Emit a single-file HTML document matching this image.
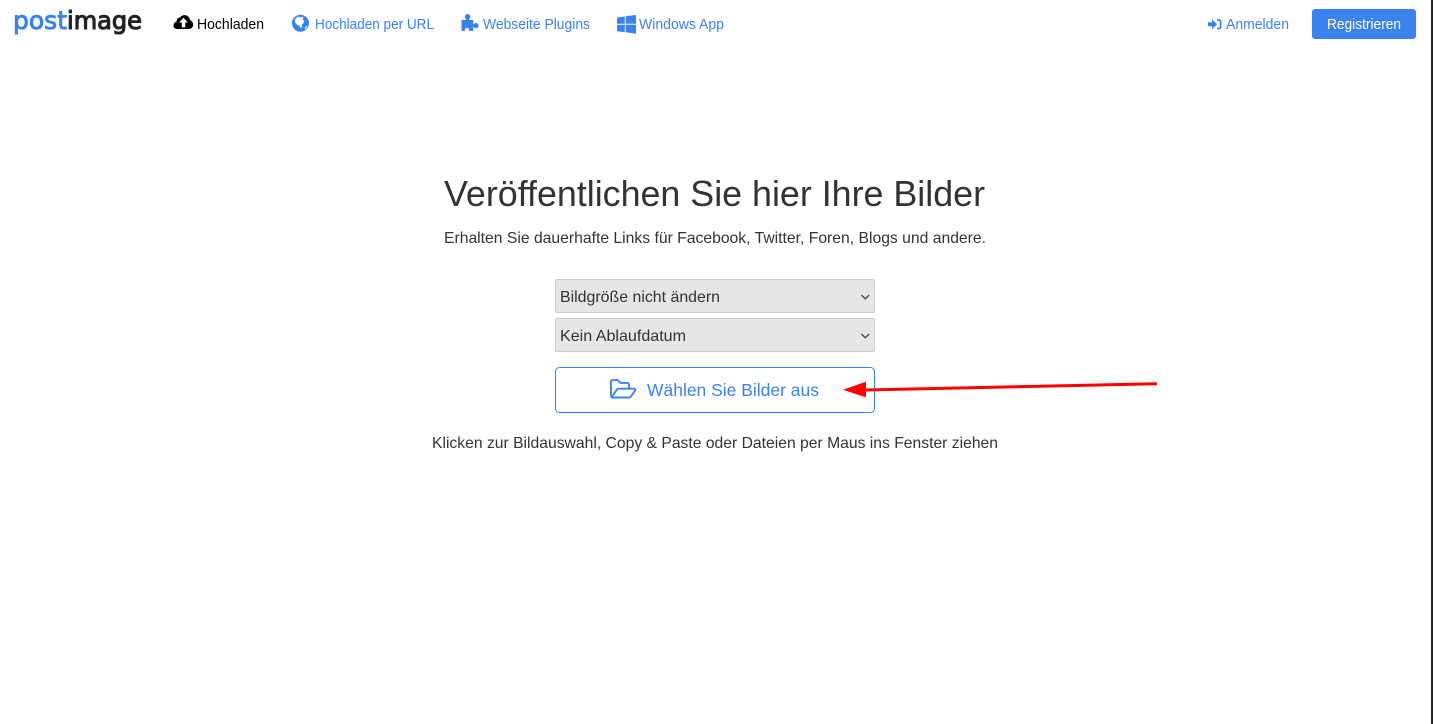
<!DOCTYPE html>
<html lang="de">
<head>
<meta charset="utf-8">
<title>Postimage</title>
<style>
html,body{margin:0;padding:0;width:1433px;height:724px;overflow:hidden;background:#fff}
svg{position:absolute;left:0;top:0;display:block}
text{font-family:"Liberation Sans",sans-serif;white-space:pre}
.n{font-size:14.4px;fill:#3b82ec}
.d{font-size:16px;fill:#333}
.l{font-family:"DejaVu Sans",sans-serif;font-size:25px}
</style>
</head>
<body>
<svg width="1433" height="724" viewBox="0 0 1433 724" xmlns="http://www.w3.org/2000/svg">
<rect x="1431" y="0" width="2" height="724" fill="#222"/>

<!-- logo -->
<text class="l" x="13" y="29" fill="#3b82ec" stroke="#3b82ec" stroke-width=".9" textLength="54" lengthAdjust="spacingAndGlyphs">post</text>
<text class="l" x="67" y="29" fill="#222" stroke="#222" stroke-width="1.100" textLength="75" lengthAdjust="spacingAndGlyphs">image</text>

<!-- cloud upload -->
<path d="M173.500 25.800c0-2.300 1.500-4 3.400-4.500-.1-.3-.1-.6-.1-.9 0-1.800 1.500-3 3.100-2.700 1-1.600 2.700-2.600 4.600-2.600 2.900 0 5.200 2.200 5.400 5 1.900.6 3.300 2.400 3.300 4.500 0 2.500-2 4.400-4.500 4.400h-11.700c-2 0-3.500-1.500-3.500-3.200z" fill="#000"/>
<path d="M183.500 17.800l-4.400 4.700h2.700v4.900h3.400v-4.900h2.700z" fill="#fff"/>
<text class="n" x="197" y="29" style="fill:#000" textLength="67" lengthAdjust="spacingAndGlyphs">Hochladen</text>

<!-- globe -->
<circle cx="300.500" cy="23.300" r="8.500" fill="#3b82ec"/>
<path d="M295 19.500c.9-1.700 2.500-2.700 4-2.900l1.500 1 1.800-.8 1.200 1.200-1 1.600 1.700 1.200-.6 2.200-1.600 1.500.1 2.400-1.500 1.300-1.300-2.600-2.200-.8-1.900-2.200z" fill="#fff"/>
<path d="M305.800 26.200l1.500-.7-.8 2.600-2 1.700z" fill="#fff"/>
<text class="n" x="315" y="29" textLength="119" lengthAdjust="spacingAndGlyphs">Hochladen per URL</text>

<!-- puzzle -->
<path d="M461.500 20h4.200c.6 0 .7-.6.2-1.100-.7-.7-1-1.300-1-2.100 0-1.500 1.200-2.800 2.700-2.800s2.800 1.300 2.800 2.800c0 .8-.3 1.400-1 2.100-.5.500-.4 1.100.2 1.100h3.600v3.600c0 .6.700.6 1 .2.500-.5 1.100-.8 1.900-.8 1.400 0 2.500 1.200 2.500 2.600s-1.100 2.600-2.500 2.600c-.8 0-1.400-.3-1.900-.8-.3-.4-1-.4-1 .2V31h-3.900c-.2-2.100-1-3.300-2.300-3.300s-2.100 1.200-2.300 3.300h-3.200z" fill="#3b82ec"/>
<text class="n" x="483" y="29" textLength="107" lengthAdjust="spacingAndGlyphs">Webseite Plugins</text>

<!-- windows -->
<path d="M617 17.500l7.800-1v7.300H617zM625.700 16.300l10.300-1.300v8.800h-10.300zM617 24.800h7.800v7.400l-7.800-1zM625.700 24.800H636v8.900l-10.300-1.400z" fill="#3b82ec"/>
<text class="n" x="639" y="29" textLength="85" lengthAdjust="spacingAndGlyphs">Windows App</text>

<!-- sign in -->
<path d="M1208 22.200h4v-3l5 5-5 5v-3h-4z" fill="#3b82ec"/>
<path d="M1217 20h2c1 0 1.600.7 1.600 1.600v5.300c0 .9-.6 1.600-1.600 1.600h-2" fill="none" stroke="#3b82ec" stroke-width="1.700"/>
<text class="n" x="1226" y="29" textLength="63" lengthAdjust="spacingAndGlyphs">Anmelden</text>

<!-- register -->
<rect x="1312" y="9" width="104" height="30" rx="3" fill="#3b82ec"/>
<text class="n" x="1327" y="29" style="fill:#fff" textLength="74" lengthAdjust="spacingAndGlyphs">Registrieren</text>

<!-- heading -->
<text x="444" y="206" font-size="36" fill="#333" textLength="541" lengthAdjust="spacingAndGlyphs">Veröffentlichen Sie hier Ihre Bilder</text>
<text class="d" x="444" y="243" textLength="542" lengthAdjust="spacingAndGlyphs">Erhalten Sie dauerhafte Links für Facebook, Twitter, Foren, Blogs und andere.</text>

<!-- selects -->
<rect x="555.500" y="279.500" width="319" height="33" rx="1.500" fill="#e6e6e6" stroke="#ccc"/>
<text class="d" x="560" y="302" textLength="160" lengthAdjust="spacingAndGlyphs">Bildgröße nicht ändern</text>
<path d="M861.500 295l3.800 3.800 3.800-3.800" fill="none" stroke="#444" stroke-width="1.300"/>
<rect x="555.500" y="318.500" width="319" height="33" rx="1.500" fill="#e6e6e6" stroke="#ccc"/>
<text class="d" x="560" y="341" textLength="126" lengthAdjust="spacingAndGlyphs">Kein Ablaufdatum</text>
<path d="M861.500 334l3.800 3.800 3.800-3.800" fill="none" stroke="#444" stroke-width="1.300"/>

<!-- button -->
<rect x="555.500" y="367.500" width="319" height="45" rx="4" fill="#fff" stroke="#3b82ec"/>
<path d="M611 396.500v-14.700c0-1 .7-1.700 1.700-1.700h5.100l2.700 2.800h6.800c1 0 1.700.7 1.700 1.700V388" fill="none" stroke="#3b82ec" stroke-width="1.900" stroke-linejoin="round"/>
<path d="M611.500 397.500l5.500-8c.3-.5.800-.8 1.400-.8h15.700c1 0 1.600 1 1.100 1.800l-4.500 6.300c-.4.500-.9.700-1.500.7z" fill="none" stroke="#3b82ec" stroke-width="1.900" stroke-linejoin="round"/>
<text x="647" y="396" font-size="17.600" fill="#3b82ec" textLength="172" lengthAdjust="spacingAndGlyphs">Wählen Sie Bilder aus</text>

<text class="d" x="432" y="448" textLength="566" lengthAdjust="spacingAndGlyphs">Klicken zur Bildauswahl, Copy &amp; Paste oder Dateien per Maus ins Fenster ziehen</text>

<!-- arrow -->
<path d="M1157 383.700L864 390" fill="none" stroke="#f00" stroke-width="3"/>
<path d="M843 389.800l23-8v15.600z" fill="#f00"/>
</svg>
</body>
</html>
